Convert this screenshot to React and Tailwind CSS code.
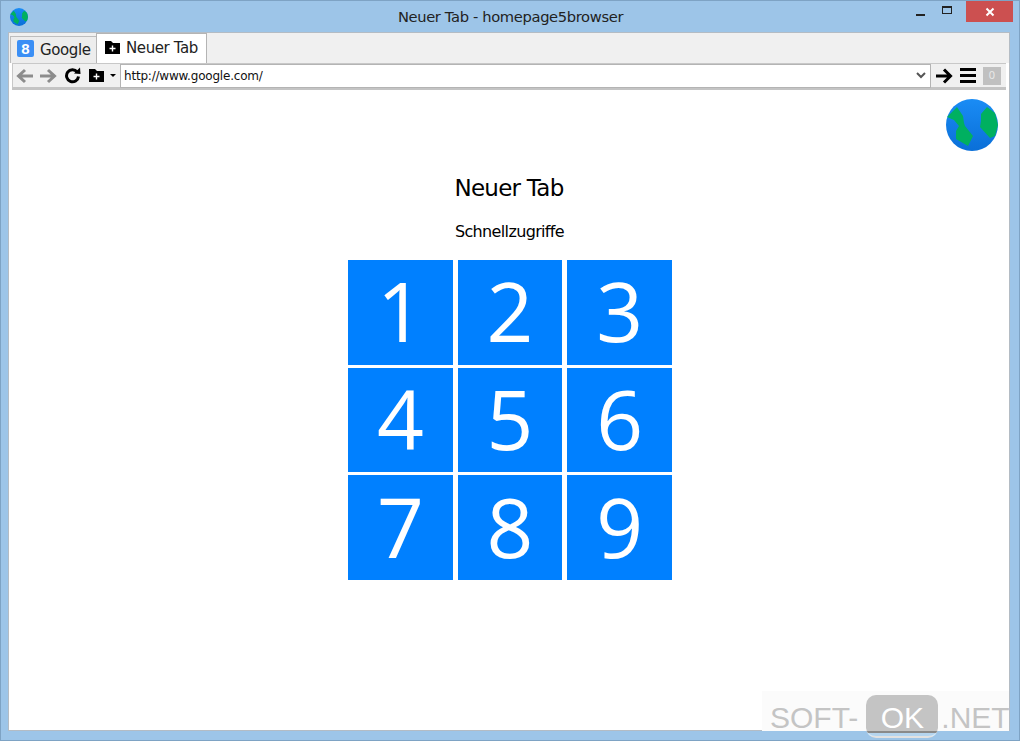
import React from "react";

const Globe = ({ size }) => (
  <svg width={size} height={size} viewBox="0 0 52 52" className="block">
    <defs>
      <linearGradient id={`g${size}`} x1="0" y1="0" x2="0" y2="1">
        <stop offset="0" stopColor="#1a8cf5" />
        <stop offset="1" stopColor="#0a6fd8" />
      </linearGradient>
    </defs>
    <circle cx="26" cy="26" r="26" fill={`url(#g${size})`} />
    <path d="M11 8 L1 18 L8 21 L13 27 L10 32 L10 40 L22 47 L27 37 L19 27 L18 24 L17 17 Z" fill="#00b060" />
    <path d="M41 8 L35 15 L35 22 L34 28 L44 39 L49 37 L52 26 L49 14 Z" fill="#00b060" />
  </svg>
);

const Folder = ({ className }) => (
  <svg width="15" height="13" viewBox="0 0 15 13" className={className}>
    <path d="M0 0 H6 L8 2 H15 V13 H0 Z" fill="#000" />
    <path d="M6.8 4.5 H8.2 V6.8 H10.5 V8.2 H8.2 V10.5 H6.8 V8.2 H4.5 V6.8 H6.8 Z" fill="#fff" />
  </svg>
);

const GoogleIcon = () => (
  <div className="w-[17px] h-[17px] rounded-[2px] bg-[#3b8ff5] flex items-center justify-center text-white text-[15px] font-bold leading-none font-['Liberation_Sans',sans-serif]">
    8
  </div>
);

const Arrow = ({ color, flip }) => (
  <svg width="18" height="16" viewBox="0 0 18 16" className={flip ? "-scale-x-100" : ""}>
    <path d="M1 8 H15 M9 2 L15.5 8 L9 14" fill="none" stroke={color} strokeWidth="3" />
  </svg>
);

const Reload = () => (
  <svg width="17" height="17" viewBox="0 0 17 17">
    <path d="M13.2 5 A6 6 0 1 0 14.5 9.5" fill="none" stroke="#000" strokeWidth="3" />
    <path d="M10 6.5 L16.5 7 L16 0.5 Z" fill="#000" />
  </svg>
);

export default function App() {
  return (
    <div className="relative w-[1020px] h-[741px] overflow-hidden bg-[#9dc5e8] border border-[#7ea3c4] flex flex-col font-['Noto_Sans',sans-serif] text-black">
      {/* title bar */}
      <div className="h-[31px] flex items-center shrink-0">
        <div className="flex-1 pl-[9px]"><Globe size={18} /></div>
        <div className="text-center text-[14.7px] text-[#222] pt-[1px] pr-[2px] font-['DejaVu_Sans',sans-serif] tracking-[-0.35px] whitespace-nowrap">
          Neuer Tab - homepage5browser
        </div>
        <div className="flex-1 flex items-start justify-end self-start pr-[6px] h-full">
          <div className="w-[24px] h-[21px] flex items-center justify-center mr-[3px]">
            <div className="w-[9px] h-[2px] bg-[#222] mt-[7px]" />
          </div>
          <div className="w-[24px] h-[21px] flex items-center justify-center mr-[7px]">
            <div className="w-[10px] h-[8px] border border-[#222] border-t-2 -mt-[4px]" />
          </div>
          <div className="w-[47px] h-[21px] bg-[#cc5050] flex items-center justify-center">
            <svg width="10" height="10" viewBox="0 0 10 10">
              <path d="M1.5 1.5 L8.5 8.5 M8.5 1.5 L1.5 8.5" stroke="#fff" strokeWidth="2" />
            </svg>
          </div>
        </div>
      </div>

      {/* browser body */}
      <div className="ml-[7px] mr-[9px] mb-[9px] flex-1 flex flex-col bg-white border border-[#b4bcc4] min-h-0">
        {/* tab strip */}
        <div className="h-[30px] bg-[#f0f0f0] flex items-end pl-[1px] shrink-0">
          <div className="h-[27px] w-[87px] flex items-center gap-[6px] pl-[6px] bg-[#ededed] border border-[#bdbdbd] border-b-0 text-[#222] whitespace-nowrap">
            <div className="-mt-[3px]"><GoogleIcon /></div>
            <span className="font-['DejaVu_Sans',sans-serif] text-[15px] tracking-[-0.4px] pt-[1px]">Google</span>
          </div>
          <div className="h-[30px] w-[111px] flex items-center gap-[6px] pl-[8px] bg-white border border-[#b4b4b4] border-b-0 -ml-[1px] whitespace-nowrap">
            <Folder className="-mt-[2px]" />
            <span className="font-['DejaVu_Sans',sans-serif] text-[15px] tracking-[-0.4px] -mt-[1px] text-[#222]">Neuer Tab</span>
          </div>
        </div>
        {/* toolbar */}
        <div className="h-[27px] mx-[3px] bg-[#f0f0f0] border-l border-t border-[#c8c8c8] border-b-[3px] border-b-[#c4c4c4] flex items-center pl-[3px] pr-[3px] shrink-0">
          <Arrow color="#8c8c8c" flip />
          <div className="ml-[5px]"><Arrow color="#8c8c8c" /></div>
          <div className="ml-[7px] -mt-[1px]"><Reload /></div>
          <Folder className="ml-[8px]" />
          <div className="ml-[6px] mr-[4px] w-0 h-0 border-l-[3px] border-r-[3px] border-t-[3px] border-l-transparent border-r-transparent border-t-black" />
          <div className="w-[811px] h-[24px] bg-white border border-[#b4b4b4] flex items-center pl-[3px] pr-[4px]">
            <span className="flex-1 text-[12px] font-['DejaVu_Sans',sans-serif] tracking-[-0.2px] text-[#111]">http://www.google.com/</span>
            <svg width="10" height="7" viewBox="0 0 10 7">
              <path d="M1 1 L5 5 L9 1" fill="none" stroke="#555" strokeWidth="2" />
            </svg>
          </div>
          <div className="ml-[5px]">
            <svg width="17" height="16" viewBox="0 0 17 16">
              <path d="M0 8 H14 M8 1.5 L14.5 8 L8 14.5" fill="none" stroke="#000" strokeWidth="3" />
            </svg>
          </div>
          <div className="ml-[7px] w-[16px] flex flex-col gap-[3px]">
            <div className="h-[3px] bg-black" />
            <div className="h-[3px] bg-black" />
            <div className="h-[3px] bg-black" />
          </div>
          <div className="ml-[7px] w-[18px] h-[18px] bg-[#c0c0c0] text-[#e8e8e8] text-[11px] flex items-center justify-center">0</div>
        </div>

        {/* page */}
        <div className="flex-1 relative flex flex-col items-center pl-[2px]">
          <div className="absolute top-[9px] right-[11px]"><Globe size={52} /></div>
          <h1 className="mt-[81px] -ml-[2px] text-[23px] leading-[34px] font-['DejaVu_Sans',sans-serif] tracking-[-0.75px] text-black">Neuer Tab</h1>
          <div className="mt-[15px] -ml-[1px] text-[16px] leading-[24px] font-['DejaVu_Sans',sans-serif] tracking-[-0.65px] text-black">Schnellzugriffe</div>
          <div className="mt-[16px] w-[324px] h-[320px] grid grid-cols-3 grid-rows-3 gap-x-[5px] gap-y-[3px]">
            {[1, 2, 3, 4, 5, 6, 7, 8, 9].map((n) => (
              <div key={n} className="bg-[#0080ff] text-white flex items-center justify-center pb-[4px] text-[82px] font-normal font-['Open_Sans',sans-serif] leading-none">
                {n}
              </div>
            ))}
          </div>
        </div>
      </div>

      {/* watermark */}
      <div className="absolute left-[761px] top-[690px] w-[247px] h-[40px] bg-[#fbfbfb] flex items-start pt-[4px] pl-[8px] text-[30px] text-[#c4c4c4] font-['Liberation_Sans',sans-serif] leading-none">
        <span className="mt-[8px]">SOFT-</span>
        <span className="ml-[8px] w-[72px] h-[43px] shrink-0 rounded-[10px] border-b-2 border-white/50 bg-[linear-gradient(#c4c4c4_0,#c4c4c4_36px,#8a8a8a_36px,#8a8a8a_38px,#b5d5ef_38px)] text-white flex items-start pt-[8px] justify-center">OK</span>
        <span className="ml-[3px] mt-[8px]">.NET</span>
      </div>
    </div>
  );
}
